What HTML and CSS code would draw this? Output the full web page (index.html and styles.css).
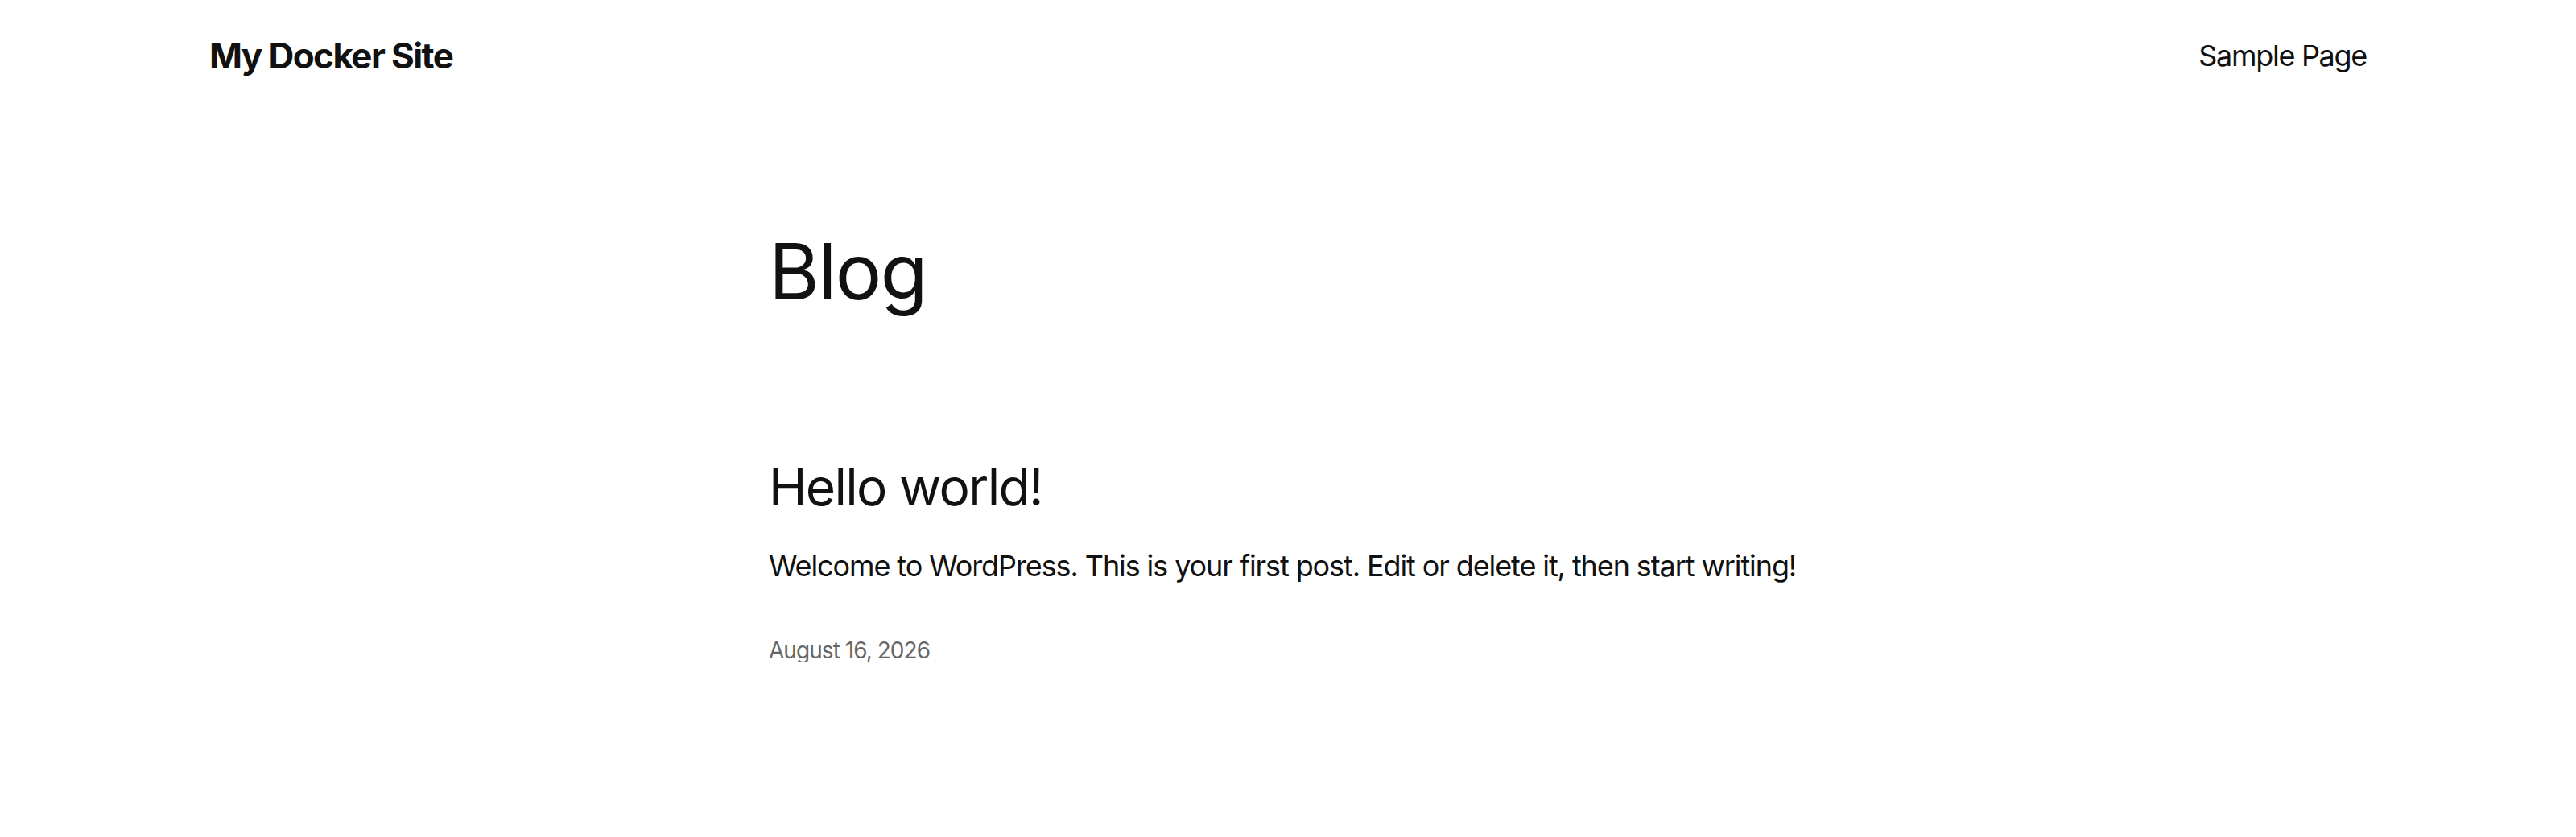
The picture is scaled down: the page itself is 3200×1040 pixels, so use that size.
FILE: index.html
```html
<!DOCTYPE html>
<html lang="en">
<head>
<meta charset="utf-8">
<title>My Docker Site</title>
<link rel="stylesheet" href="styles.css">
</head>
<body>
<header class="site-header">
  <a class="site-title" href="#">My Docker Site</a>
  <nav class="site-nav"><a href="#">Sample Page</a></nav>
</header>
<main class="content">
  <h1 class="page-title">Blog</h1>
  <article class="post">
    <h2 class="post-title"><a href="#">Hello world!</a></h2>
    <p class="post-excerpt">Welcome to WordPress. This is your first post. Edit or delete it, then start writing!</p>
    <div class="post-date">August 16, 2026</div>
  </article>
</main>
</body>
</html>
```
FILE: styles.css
```css
html, body {
  margin: 0;
  padding: 0;
  background: #ffffff;
}
body {
  font-family: Inter, "Noto Sans", "Liberation Sans", sans-serif;
  color: #111111;
}
a {
  color: inherit;
  text-decoration: none;
}
.site-header {
  max-width: 2680px;
  margin: 0 auto;
  padding: 47px 0;
  display: flex;
  justify-content: space-between;
  align-items: center;
}
.site-title {
  font-size: 44px;
  line-height: 1;
  font-weight: 700;
  letter-spacing: -1.6px;
}
.site-nav {
  font-size: 36px;
  line-height: 1;
  font-weight: 400;
  letter-spacing: -1.3px;
}
.content {
  max-width: 1290px;
  margin: 0 auto;
}
.page-title {
  margin: 151px 0 0;
  font-size: 96px;
  line-height: 1;
  font-weight: 400;
  letter-spacing: -1.6px;
}
.post-title {
  margin: 188px 0 0;
  font-size: 64px;
  line-height: 1;
  font-weight: 400;
  letter-spacing: -1.7px;
}
.post-excerpt {
  margin: 48px 0 0;
  font-size: 36px;
  line-height: 1;
  letter-spacing: -1.1px;
}
.post-date {
  margin-top: 73px;
  font-size: 28px;
  line-height: 1;
  color: #666666;
  letter-spacing: -0.95px;
}
```
